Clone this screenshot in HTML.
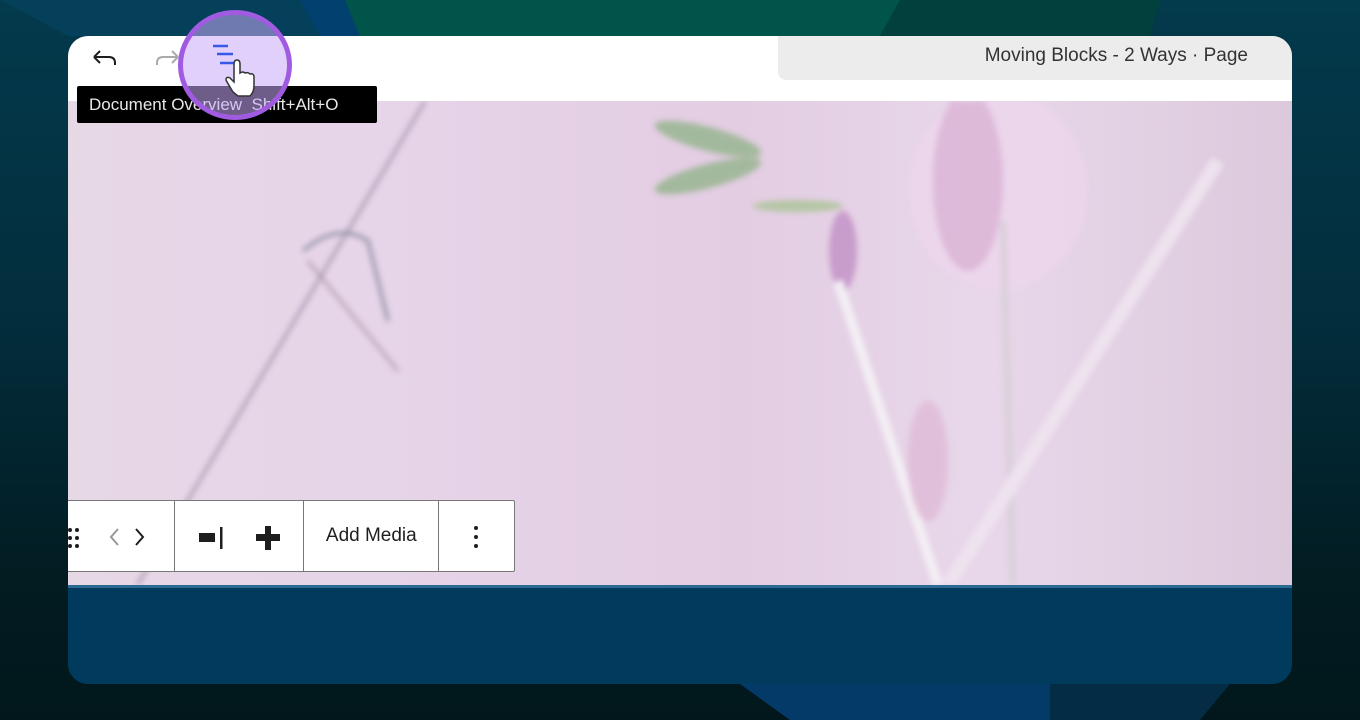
<!DOCTYPE html>
<html><head><meta charset="utf-8"><style>
*{margin:0;padding:0;box-sizing:border-box}
body{width:1360px;height:720px;overflow:hidden;position:relative;font-family:"Liberation Sans",sans-serif;
background:linear-gradient(180deg,#033a4c 0%,#032d3c 45%,#021c22 80%,#01171b 100%);}
.bg{position:absolute;inset:0}
.card{position:absolute;left:68px;top:36px;width:1224px;height:648px;border-radius:20px;overflow:hidden;background:#003a5c}
.head{position:absolute;left:0;top:0;width:1224px;height:65px;background:#fff}
.title{position:absolute;left:710px;top:0;width:514px;height:44px;background:#ececec;border-bottom-left-radius:8px;font-size:19px;color:#333;text-align:right;padding-right:44px;line-height:40px}
.img{position:absolute;left:0;top:65px;width:1224px;height:484px;overflow:hidden;
background:linear-gradient(90deg,#e7d8e6 0%,#e6d3e8 30%,#e3cde2 55%,#e8d7ea 75%,#dcc9dc 100%)}
.bottom{position:absolute;left:0;top:549px;width:1224px;height:99px;background:#003a5c;border-top:3px solid #2a6a92}
.tb{position:absolute;left:-2px;top:399px;width:449px;height:72px;background:#fff;border:1px solid #777;border-radius:2px;display:flex}
.tb>div{border-right:1px solid #777;height:100%;position:relative}
.tip{position:absolute;left:77px;top:86px;width:300px;height:37px;background:#000;border-radius:2px;color:#e8e8e8;font-size:17px;line-height:37px;padding-left:12px;white-space:nowrap}
.circ{position:absolute;left:178px;top:10px;width:114px;height:110px;border-radius:50%;background:rgba(200,170,250,.55);border:5px solid #a15be0}
</style></head><body>
<svg class="bg" width="1360" height="720">
<polygon points="0,0 340,0 400,36 68,36" fill="#04405a"/>
<polygon points="300,0 345,0 360,36 320,36" fill="#024070"/>
<polygon points="345,0 900,0 880,36 360,36" fill="#01544a"/>
<polygon points="900,0 1160,0 1150,36 880,36" fill="#01403c"/>
<polygon points="740,684 1050,684 1050,720 790,720" fill="#033a68"/>
<polygon points="1050,684 1230,684 1200,720 1050,720" fill="#042c44"/>
</svg>
<div class="card">
<div class="head">
<svg style="position:absolute;left:22px;top:10px" width="30" height="24" viewBox="0 0 30 24"><path d="M4 11 L10 5 M4 11 L10 17 M4 11 H19 Q25 11 25 17 V19" stroke="#1e1e1e" stroke-width="2" fill="none"/></svg>
<svg style="position:absolute;left:84px;top:10px" width="30" height="24" viewBox="0 0 30 24"><path d="M26 11 L20 5 M26 11 L20 17 M26 11 H11 Q5 11 5 17 V19" stroke="#aaa" stroke-width="2" fill="none"/></svg>
<div class="title">Moving Blocks - 2 Ways · Page</div>
</div>
<div class="img">
<svg width="1224" height="484" style="filter:blur(3px)">
<path d="M360 -5 L60 500" stroke="#a898b0" stroke-width="3" fill="none"/>
<path d="M235 150 Q270 120 300 140 L320 220" stroke="#8a8aa0" stroke-width="3" fill="none"/>
<path d="M240 160 L330 270" stroke="#a08a98" stroke-width="2" fill="none"/>
<ellipse cx="640" cy="38" rx="55" ry="12" transform="rotate(15 640 38)" fill="#a3b99d"/>
<ellipse cx="640" cy="75" rx="55" ry="12" transform="rotate(-15 640 75)" fill="#a3b99d"/>
<ellipse cx="730" cy="105" rx="45" ry="6" fill="#b4c6a4"/>
<ellipse cx="930" cy="90" rx="90" ry="100" fill="#ecd6ec" opacity=".8"/>
<ellipse cx="900" cy="80" rx="35" ry="90" fill="#d3a8cc" opacity=".6"/>
<ellipse cx="775" cy="150" rx="14" ry="40" fill="#c89ccb"/>
<path d="M770 180 L870 484" stroke="#f3eef4" stroke-width="10" fill="none"/>
<path d="M935 120 L945 484" stroke="#d8cfd8" stroke-width="6" fill="none"/>
<path d="M1150 60 L880 484" stroke="#eee2ee" stroke-width="14" fill="none"/>
<ellipse cx="860" cy="360" rx="20" ry="60" fill="#dcb0d0" opacity=".6"/>
</svg>
<div class="tb">
<div style="width:108px">
<svg style="position:absolute;left:0;top:26px" width="20" height="22"><g fill="#1e1e1e"><circle cx="3" cy="3" r="2"/><circle cx="10" cy="3" r="2"/><circle cx="3" cy="11" r="2"/><circle cx="10" cy="11" r="2"/><circle cx="3" cy="19" r="2"/><circle cx="10" cy="19" r="2"/></g></svg>
<svg style="position:absolute;left:40px;top:25px" width="40" height="22"><path d="M11 3 L4 11 L11 19" stroke="#999" stroke-width="2" fill="none"/><path d="M29 3 L36 11 L29 19" stroke="#1e1e1e" stroke-width="2" fill="none"/></svg>
</div>
<div style="width:130px">
<svg style="position:absolute;left:22px;top:24px" width="90" height="26"><rect x="2" y="8" width="16" height="9" fill="#1e1e1e"/><rect x="23" y="2" width="2.5" height="22" fill="#1e1e1e"/><rect x="68" y="1" width="6" height="24" fill="#1e1e1e"/><rect x="59" y="9" width="24" height="7" fill="#1e1e1e"/></svg>
</div>
<div style="width:135px;font-size:19px;color:#1e1e1e;text-align:center;line-height:70px">Add Media</div>
<div style="width:75px;border-right:none">
<svg style="position:absolute;left:32px;top:24px" width="10" height="24"><g fill="#1e1e1e"><circle cx="5" cy="3" r="2"/><circle cx="5" cy="12" r="2"/><circle cx="5" cy="21" r="2"/></g></svg>
</div>
</div>
</div>
<div class="bottom"></div>
</div>
<div class="tip">Document Overview &nbsp;Shift+Alt+O</div>
<div class="circ"></div>
<svg style="position:absolute;left:210px;top:40px" width="60" height="60" viewBox="0 0 60 60">
<path d="M3 6 H18 M7 14 H23 M10 23 H29" stroke="#3858e9" stroke-width="2.5" fill="none"/>
<path d="M23 52 Q18 44 16 40 Q16 36 20 38 L24 42 V24 Q24 20 27 20 Q30 20 30 24 V33 Q33 31 35 33 Q38 32 40 34 Q43 33 44 36 V46 Q44 52 40 56 H28 Z" fill="#fff" stroke="#333" stroke-width="1.5"/>
</svg>
</body></html>
